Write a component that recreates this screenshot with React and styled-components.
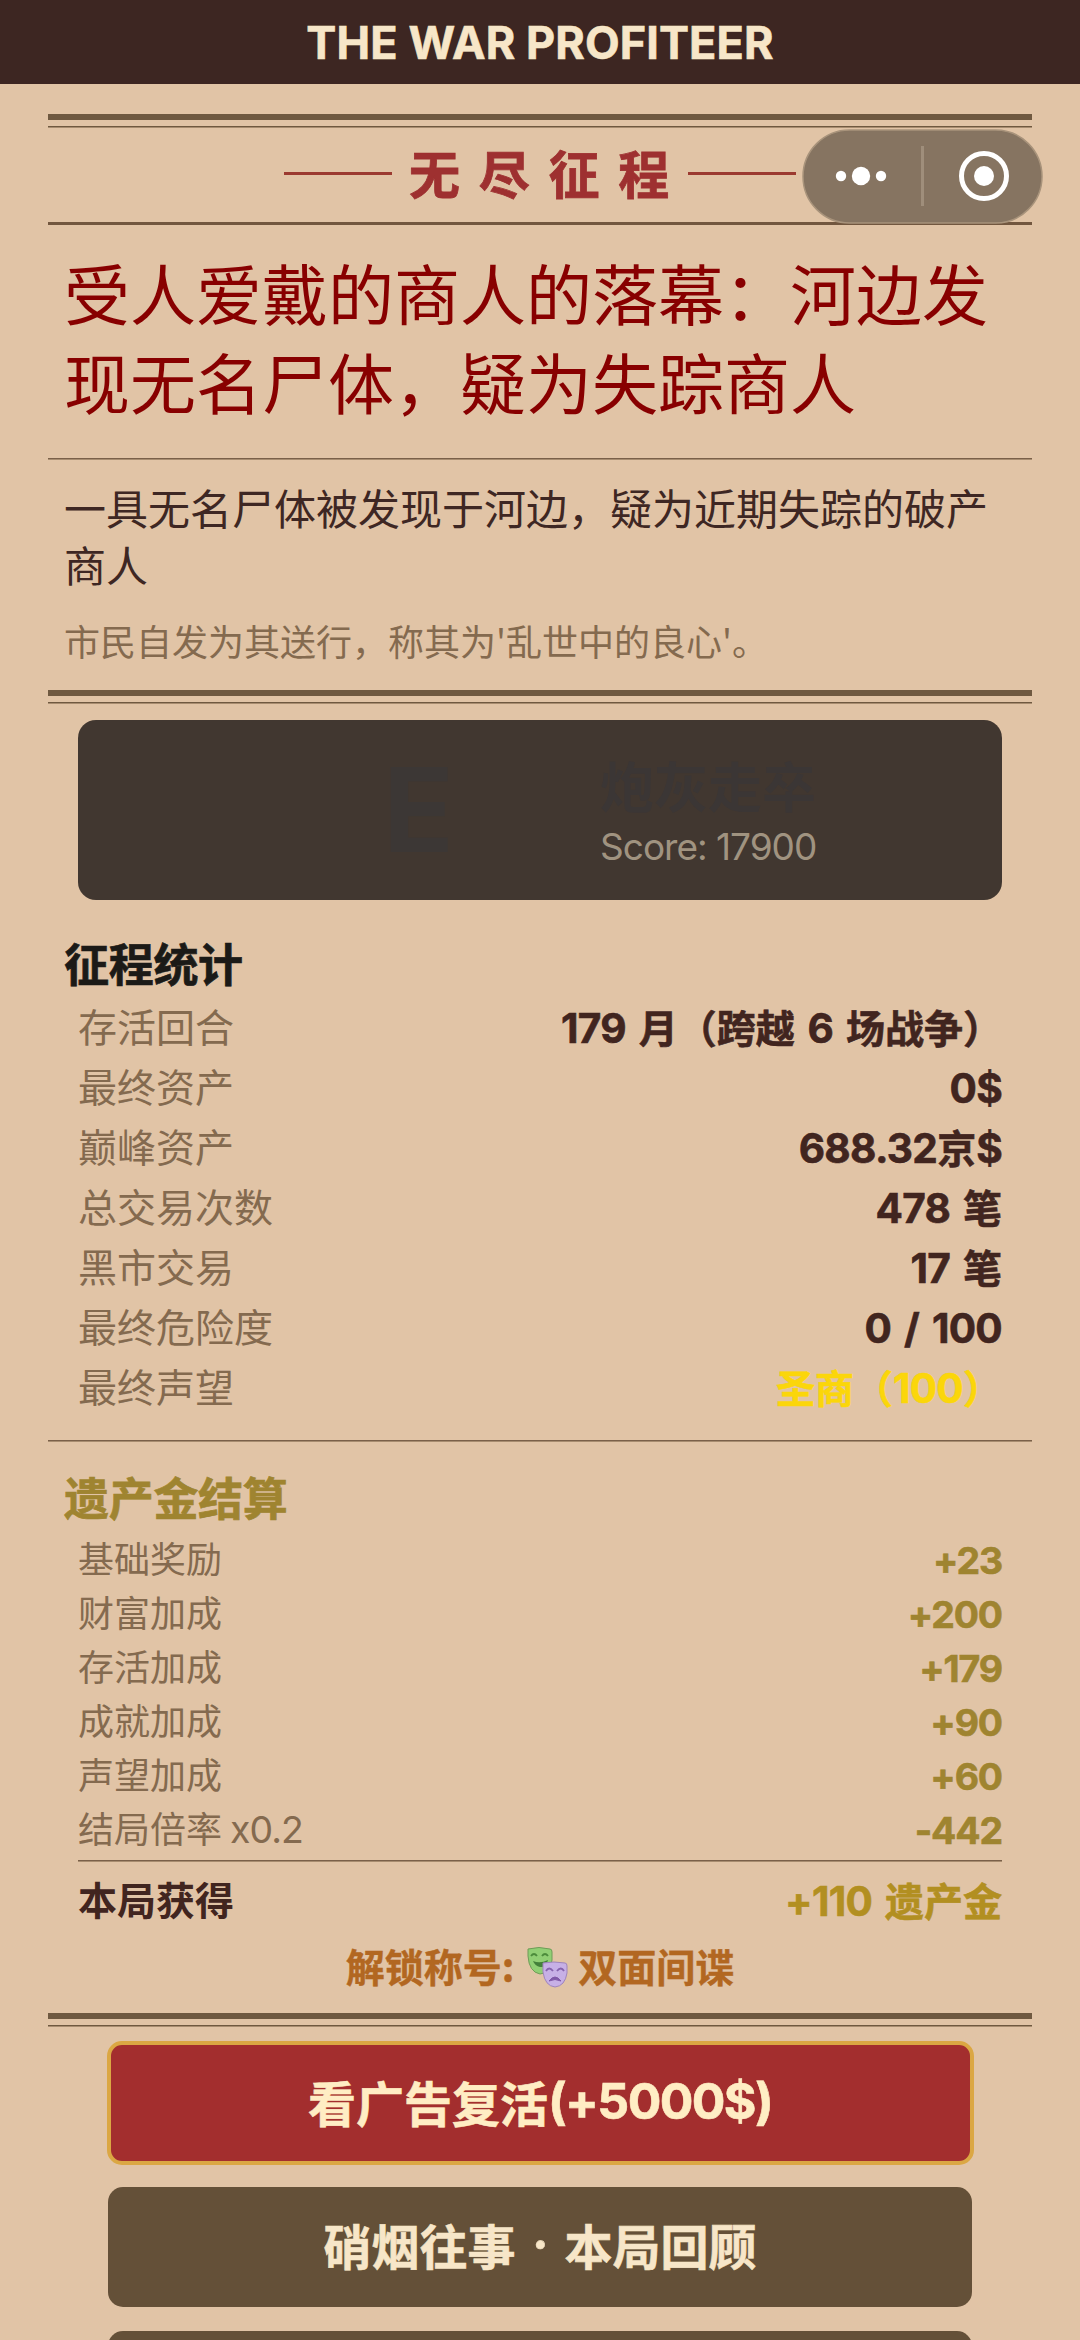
import React from 'react';
import styled, { createGlobalStyle } from 'styled-components';

const GlobalStyle = createGlobalStyle`
  * {
    box-sizing: border-box;
  }

  body {
    margin: 0;
    background-color: #e1c4a6;
    font-family: 'Noto Sans CJK SC', sans-serif;
  }
`

const Page = styled.div`
  width: 1080px;
  height: 2340px;
  overflow: hidden;
  background-color: #e1c4a6;
  color: #3e2723;
`

const TopBar = styled.header`
  display: flex;
  align-items: center;
  justify-content: center;
  height: 84px;
  background-color: #3d2622;
  color: #f7e6c8;
  font-family: Inter, sans-serif;
  font-size: 45px;
  font-weight: 700;
  letter-spacing: 0.1px;
  -webkit-text-stroke: 0.6px;
`

const Sheet = styled.main`
  padding: 30px 48px 0;
`

const DoubleRule = styled.div`
  height: 14px;
  margin-top: ${props => props.$top || 0}px;
  border-top: 6px solid #6f5940;
  background: linear-gradient(#6f5940, #6f5940) 0 6px / 100% 1px no-repeat,
    linear-gradient(#a88d70, #a88d70) 0 7px / 100% 1px no-repeat;
`

const Rule = styled.div`
  height: 2px;
  margin: ${props => props.$margin || '0'};
  background: linear-gradient(#7a6049 50%, #a88d70 50%);
`

const Masthead = styled.div`
  position: relative;
  display: flex;
  align-items: center;
  justify-content: center;
  height: 97px;
  border-bottom: 3px solid #72573f;
`

const Dash = styled.span`
  width: 108px;
  height: 3px;
  margin-bottom: 3px;
  background-color: #9b3a30;
`

const MastTitle = styled.h1`
  margin: -7px 0 0 17px;
  color: #9e3030;
  font-size: 51px;
  font-weight: 700;
  line-height: 70px;
  letter-spacing: 18.8px;
  -webkit-text-stroke: 0.8px;
`

const Capsule = styled.div`
  position: absolute;
  top: 1px;
  right: -11px;
  width: 241px;
  height: 95px;
`

const Headline = styled.h2`
  margin: 0;
  padding: 22px 16px 33px;
  color: #880000;
  font-size: 66px;
  font-weight: 400;
  line-height: 89px;
`

const Lead = styled.p`
  margin: 0;
  padding: 19px 16px 0;
  font-size: 42px;
  line-height: 56.5px;
`

const Remark = styled.p`
  margin: 23px 0 0;
  padding: 0 16px;
  color: #846a4f;
  font-size: 36px;
  line-height: 50px;
`

const RankCard = styled.section`
  display: flex;
  align-items: center;
  height: 180px;
  margin: 16px 30px 0;
  padding-left: 305px;
  border-radius: 18px;
  background-color: #413730;
`

const RankLetter = styled.div`
  width: 217px;
  color: #3c3735;
  font-family: Inter, sans-serif;
  font-size: 117px;
  font-weight: 700;
  line-height: 120px;
`

const RankName = styled.div`
  color: #3b3635;
  font-size: 54px;
  font-weight: 700;
  line-height: 72px;
`

const RankScore = styled.div`
  margin-top: 1px;
  color: #a09380;
  font-family: Inter, sans-serif;
  font-size: 37px;
  line-height: 50px;
  letter-spacing: -1px;
`

const SectionTitle = styled.h3`
  margin: ${props => props.$margin};
  padding: 0 16px;
  color: ${props => props.$color};
  font-size: 45px;
  font-weight: 700;
  line-height: 60px;
  letter-spacing: -0.3px;
  -webkit-text-stroke: 0.7px;
`

const Row = styled.div`
  display: flex;
  justify-content: space-between;
  margin: 0 30px;
  height: ${props => props.$height}px;
  line-height: ${props => props.$height}px;
  font-size: ${props => props.$size}px;
`

const Label = styled.span`
  margin-top: -1px;
  color: ${props => props.$color || '#846a4f'};
  font-weight: ${props => (props.$bold ? 700 : 400)};
`

const Value = styled.span`
  color: ${props => props.$color || '#41251f'};
  font-weight: 700;
  white-space: pre;
  word-spacing: 4px;
  -webkit-text-stroke: 0.6px;
`

// latin letters and digits run a little taller than the CJK face
const Num = styled.span`
  font-family: Inter, sans-serif;
  font-size: 1.04em;
  letter-spacing: ${props => props.$track || -0.7}px;
`

const Unlock = styled.div`
  display: flex;
  align-items: center;
  justify-content: center;
  height: 54px;
  margin-top: 9px;
  color: #b26721;
  font-size: 39px;
  font-weight: 700;
  line-height: 54px;
  -webkit-text-stroke: 0.4px;
`

const Masks = styled.svg`
  width: 42px;
  height: 42px;
  margin: 4px 10px 0 12px;
`

const Button = styled.button`
  display: flex;
  align-items: center;
  justify-content: center;
  width: 864px;
  height: 120px;
  margin: 24px auto 0;
  padding: 0 0 6px;
  border: none;
  border-radius: 15px;
  background-color: #645038;
  color: #f7e6c8;
  font-family: 'Noto Sans CJK SC', sans-serif;
  font-size: 48px;
  font-weight: 700;
  line-height: 72px;
  white-space: pre;
  word-spacing: 5.5px;
  -webkit-text-stroke: 0.6px;
`

const ReviveButton = styled(Button)`
  width: 867px;
  height: 124px;
  margin: 14px auto -2px;
  padding-bottom: 5px;
  border: 4px solid #dba743;
  background-color: #a32e2e;
  color: #ffedc4;
`

const STATS = [
  { label: '存活回合', value: <><Num>179</Num> 月（跨越 <Num>6</Num> 场战争）</> },
  { label: '最终资产', value: <Num>0$</Num> },
  { label: '巅峰资产', value: <><Num>688.32</Num>京<Num>$</Num></> },
  { label: '总交易次数', value: <><Num>478</Num> 笔</> },
  { label: '黑市交易', value: <><Num>17</Num> 笔</> },
  { label: '最终危险度', value: <Num>0 / 100</Num> },
  { label: '最终声望', value: <>圣商（<Num>100</Num>）</>, color: '#fbd60a' },
]

const LEGACY = [
  { label: '基础奖励', value: '+23' },
  { label: '财富加成', value: '+200' },
  { label: '存活加成', value: '+179' },
  { label: '成就加成', value: '+90' },
  { label: '声望加成', value: '+60' },
  { label: <>结局倍率 <Num $track={-1}>x0.2</Num></>, value: '-442' },
]

const CapsuleMenu = () => (
  <Capsule>
    <svg width="241" height="95" viewBox="0 0 241 95">
      <rect x="1" y="1" width="239" height="93" rx="46.5" fill="#867461" stroke="#a8937b" strokeWidth="1.5" />
      <circle cx="39" cy="47" r="5.2" fill="#fff" />
      <circle cx="59" cy="47" r="9.2" fill="#fff" />
      <circle cx="79" cy="47" r="5.2" fill="#fff" />
      <rect x="119" y="17" width="3" height="60" fill="#9f8e7b" />
      <circle cx="182" cy="47" r="22.5" fill="none" stroke="#fff" strokeWidth="5" />
      <circle cx="182" cy="47" r="10" fill="#fff" />
    </svg>
  </Capsule>
)

const MasksIcon = () => (
  <Masks viewBox="0 0 42 42">
    <path d="M2 3 Q13 0 24 3 Q26 3 26 6 V14 Q25 27 14 28 Q3 26 2 10 Z" fill="#90cf74" stroke="#6f9c58" strokeWidth="1" />
    <path d="M5 10 Q8 6 11 10 M16 10 Q19 6 22 10" fill="none" stroke="#4c8b3c" strokeWidth="1.8" />
    <path d="M7 15 Q14 18 22 14 Q20 22 14 21 Q9 20 7 15 Z" fill="#43803a" />
    <path d="M17 17 Q28 15 39 17 Q41 17 41 20 V27 Q39 40 29 41 Q19 40 17 26 Z" fill="#c7b0e6" stroke="#9e84bb" strokeWidth="1" />
    <path d="M20 25 Q23 20 27 25 M31 25 Q35 20 38 25" fill="none" stroke="#8563ad" strokeWidth="1.8" />
    <path d="M23 35 Q29 27 35 35 Q29 32 23 35 Z" fill="#8059a8" stroke="#8059a8" strokeWidth="1" />
  </Masks>
)

const App = () => {
  return (
    <Page>
      <GlobalStyle />
      <TopBar>THE WAR PROFITEER</TopBar>
      <Sheet>
        <DoubleRule />
        <Masthead>
          <Dash />
          <MastTitle>无尽征程</MastTitle>
          <Dash />
          <CapsuleMenu />
        </Masthead>
        <Headline>受人爱戴的商人的落幕：河边发现无名尸体，疑为失踪商人</Headline>
        <Rule />
        <Lead>一具无名尸体被发现于河边，疑为近期失踪的破产商人</Lead>
        <Remark>市民自发为其送行，称其为'乱世中的良心'。</Remark>
        <DoubleRule $top={25} />
        <RankCard>
          <RankLetter>E</RankLetter>
          <div>
            <RankName>炮灰走卒</RankName>
            <RankScore>Score: 17900</RankScore>
          </div>
        </RankCard>

        <SectionTitle $color="#1b1a17" $margin="33px 0 3px">征程统计</SectionTitle>
        {STATS.map(({ label, value, color }) => (
          <Row key={label} $height={60} $size={39}>
            <Label>{label}</Label>
            <Value $color={color}>{value}</Value>
          </Row>
        ))}
        <Rule $margin="24px 0 25px" />

        <SectionTitle $color="#9f8430" $margin="0 0 4px">遗产金结算</SectionTitle>
        {LEGACY.map(({ label, value }) => (
          <Row key={value} $height={54} $size={36}>
            <Label>{label}</Label>
            <Value $color="#9f8430"><Num $track={-1.1}>{value}</Num></Value>
          </Row>
        ))}
        <Rule $margin="5px 30px 7px" />
        <Row $height={60} $size={39}>
          <Label $bold $color="#41251f">本局获得</Label>
          <Value $color="#b28f21"><Num>+110</Num> 遗产金</Value>
        </Row>
        <Unlock>
          <span>解锁称号:</span>
          <MasksIcon />
          <span>双面间谍</span>
        </Unlock>

        <DoubleRule $top={21} />
        <ReviveButton>看广告复活<Num $track={-1.6}>(+5000$)</Num></ReviveButton>
        <Button>硝烟往事<Num> · </Num>本局回顾</Button>
        <Button />
      </Sheet>
    </Page>
  )
}

export default App
